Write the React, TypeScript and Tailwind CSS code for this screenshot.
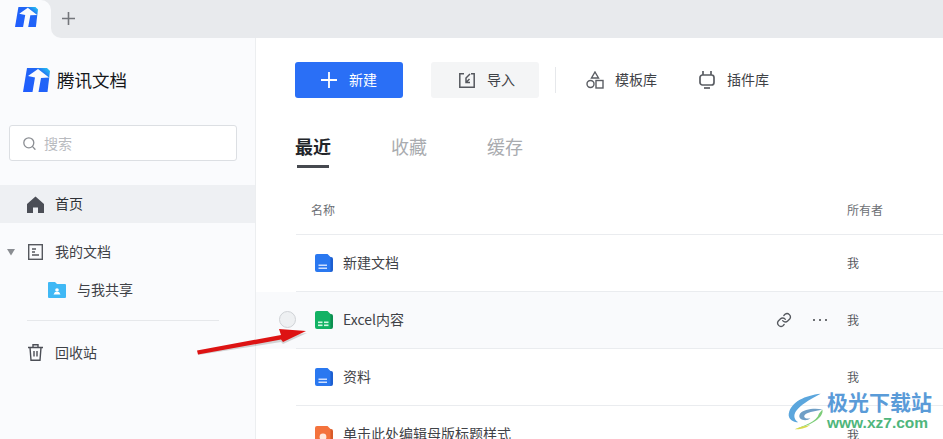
import React from "react";

const font = { fontFamily: '"Noto Sans CJK SC", "Liberation Sans", sans-serif' };

function Logo({ w, h, id }: { w: number; h: number; id: string }) {
  return (
    <svg width={w} height={h} viewBox="0 0 27 24" preserveAspectRatio="none" className="shrink-0">
      <defs>
        <linearGradient id={id} x1="0" y1="1" x2="1" y2="0">
          <stop offset="0" stopColor="#1f5cff" />
          <stop offset="0.72" stopColor="#2166f5" />
          <stop offset="0.92" stopColor="#25b4f0" />
        </linearGradient>
      </defs>
      <path d="M4 0 H24 L27 3 L24.5 24 H0 Z" fill={`url(#${id})`} />
      <path d="M15 1 L5 8 L12 9.5 L9.5 24 L15.5 24 L18 10 L26 9.5 Z" fill="#fafbfd" />
    </svg>
  );
}

function DocIcon({ color, dark, kind }: { color: string; dark: string; kind: "doc" | "sheet" | "ppt" }) {
  return (
    <svg width="18" height="18" viewBox="0 0 18 18" className="shrink-0">
      <path d="M12 3 H16 a2 2 0 0 1 2 2 V16 a2 2 0 0 1 -2 2 H12 Z" fill={dark} />
      <path d="M2 0 H12.5 L15.5 3 V18 H2 a2 2 0 0 1 -2 -2 V2 a2 2 0 0 1 2 -2 Z" fill={color} />
      {kind === "doc" && (
        <g fill="#cfe0ff">
          <rect x="3.5" y="10.5" width="8.5" height="1.5" />
          <rect x="3.5" y="13.5" width="8.5" height="1.5" />
        </g>
      )}
      {kind === "sheet" && (
        <g fill="#d5f7e4">
          <rect x="3" y="10.5" width="4.5" height="1.6" />
          <rect x="9" y="10.5" width="4.5" height="1.6" />
          <rect x="3" y="13.5" width="4.5" height="1.6" />
          <rect x="9" y="13.5" width="4.5" height="1.6" />
        </g>
      )}
      {kind === "ppt" && <circle cx="8" cy="11" r="3.4" fill="#ffe9df" />}
    </svg>
  );
}

function Row({
  icon,
  name,
  hover,
  last,
}: {
  icon: React.ReactNode;
  name: string;
  hover?: boolean;
  last?: boolean;
}) {
  return (
    <div className={`flex h-[57px] shrink-0 ${hover ? "bg-[#f9fafc]" : ""}`}>
      <div className="w-[40px] shrink-0 flex items-center justify-center pl-[23px]">
        {hover && <div className="w-[17px] h-[17px] shrink-0 rounded-full bg-[#eef0f2] border border-[#cfd2d6] mb-[2px]" />}
      </div>
      <div className={`flex-1 flex items-center pl-[19px] ${last ? "" : "border-b border-[#eaecef]"}`}>
        {icon}
        <span className="ml-[10px] w-[433px] shrink-0 text-[14px] text-[#3f4247] whitespace-nowrap pb-[2px]">{name}</span>
        <div className="w-[71px] flex items-center shrink-0">
          {hover && (
            <>
              <svg width="16" height="16" viewBox="0 0 24 24" fill="none" stroke="#55585e" strokeWidth="2" strokeLinecap="round" strokeLinejoin="round" className="shrink-0">
                <path d="M10 13a5 5 0 0 0 7.5.5l3-3a5 5 0 0 0-7-7l-1.7 1.7" />
                <path d="M14 11a5 5 0 0 0-7.5-.5l-3 3a5 5 0 0 0 7 7l1.7-1.7" />
              </svg>
              <span className="ml-[21px] flex gap-[4px]">
                <i className="block w-[2px] h-[2px] rounded-full bg-[#3f4247]" />
                <i className="block w-[2px] h-[2px] rounded-full bg-[#3f4247]" />
                <i className="block w-[2px] h-[2px] rounded-full bg-[#3f4247]" />
              </span>
            </>
          )}
        </div>
        <span className="text-[12px] text-[#55585e]">我</span>
      </div>
    </div>
  );
}

export default function App() {
  return (
    <div className="relative w-[943px] h-[439px] overflow-hidden bg-white flex flex-col" style={font}>
      {/* tab bar */}
      <div className="h-[38px] shrink-0 bg-[#e8eaed] flex items-start">
        <div className="w-[51px] h-[38px] bg-[#fafbfd] rounded-tr-[10px] pl-[15px] pt-[7px]">
          <Logo w={23} h={20} id="lgTab" />
        </div>
        <div className="w-[18px] h-[38px] bg-[#fafbfd]">
          <div className="w-[18px] h-[38px] bg-[#e8eaed] rounded-bl-[10px]" />
        </div>
        <svg width="13" height="13" viewBox="0 0 13 13" className="mt-[12px] ml-[-7px]" stroke="#73767b" strokeWidth="1.6">
          <path d="M6.5 0 V13 M0 6.5 H13" />
        </svg>
      </div>

      <div className="flex flex-1 min-h-0">
        {/* sidebar */}
        <div className="w-[256px] shrink-0 bg-[#fafbfd] border-r border-[#eceef0] flex flex-col">
          <div className="flex items-center pl-[23px] mt-[30px] h-[24px] mb-[33px]">
            <Logo w={27} h={24} id="lgSide" />
            <span className="ml-[7px] text-[17.5px] leading-none text-[#15171a]">腾讯文档</span>
          </div>
          <div className="ml-[9px] w-[228px] h-[36px] bg-white border border-[#dcdfe3] rounded-[3px] flex items-center pl-[12px]">
            <svg width="15" height="15" viewBox="0 0 15 15" fill="none" stroke="#8b8e93" strokeWidth="1.3" strokeLinecap="round">
              <circle cx="6.8" cy="6.8" r="5" />
              <path d="M10.6 10.6 L13 13.2" />
            </svg>
            <span className="ml-[7px] text-[14px] text-[#b9bbbf]">搜索</span>
          </div>
          <div className="mt-[24px] h-[38px] bg-[#eef0f3] flex items-center pl-[27px]">
            <svg width="17" height="17" viewBox="0 0 17 17" className="shrink-0">
              <path d="M8.5 0.5 L17 8 V17 H11 V11.5 H6 V17 H0 V8 Z" fill="#4b4e56" />
            </svg>
            <span className="ml-[11px] text-[14px] text-[#2e3136] pb-[2px]">首页</span>
          </div>
          <div className="mt-[10px] h-[38px] flex items-center pl-[7px]">
            <svg width="8" height="7" viewBox="0 0 8 7" className="shrink-0"><path d="M0 0 H8 L4 6.5 Z" fill="#8a8d92" /></svg>
            <svg width="15" height="16" viewBox="0 0 15 16" fill="none" stroke="#55585e" strokeWidth="1.4" className="ml-[13px] shrink-0">
              <rect x="0.7" y="0.7" width="13.6" height="14.6" />
              <path d="M4 5 H8 M4 8 H7 M4 11 H11" />
            </svg>
            <span className="ml-[12px] text-[14px] text-[#3f4247] pb-[2px]">我的文档</span>
          </div>
          <div className="h-[38px] flex items-center pl-[48px]">
            <svg width="18" height="16" viewBox="0 0 18 16" className="shrink-0">
              <path d="M0 1 a1 1 0 0 1 1 -1 H7 L9 2 H17 a1 1 0 0 1 1 1 V15 a1 1 0 0 1 -1 1 H1 a1 1 0 0 1 -1 -1 Z" fill="#3fb8f5" />
              <circle cx="9" cy="8" r="1.8" fill="#fff" />
              <path d="M5.5 12.5 H12.5 L11 10 H7 Z" fill="#fff" />
            </svg>
            <span className="ml-[11px] text-[14px] text-[#3f4247] pb-[2px]">与我共享</span>
          </div>
          <div className="mt-[11px] ml-[27px] w-[192px] border-t border-[#e6e8eb]" />
          <div className="mt-[12px] h-[38px] flex items-center pl-[28px]">
            <svg width="15" height="17" viewBox="0 0 15 17" fill="none" stroke="#4b4e56" strokeWidth="1.4" className="shrink-0">
              <path d="M0 3.5 H15 M5 3.5 V0.8 H10 V3.5 M2 3.5 L3 16.2 H12 L13 3.5 M6 7 V12.5 M9 7 V12.5" />
            </svg>
            <span className="ml-[12px] text-[14px] text-[#3f4247]">回收站</span>
          </div>
        </div>

        {/* main */}
        <div className="flex-1 min-w-0 flex flex-col">
          <div className="flex items-center pl-[39px] pt-[24px] shrink-0">
            <div className="w-[108px] h-[36px] bg-[#2a6ff6] rounded-[3px] flex items-center pl-[26px]">
              <svg width="16" height="16" viewBox="0 0 16 16" stroke="#fff" strokeWidth="1.8"><path d="M8 0 V16 M0 8 H16" /></svg>
              <span className="ml-[12px] text-[14px] text-white pb-[2px]">新建</span>
            </div>
            <div className="ml-[28px] w-[108px] h-[36px] bg-[#f4f5f6] rounded-[3px] flex items-center pl-[28px]">
              <svg width="16" height="15" viewBox="0 0 16 15" fill="none" stroke="#55585e" strokeWidth="1.5" className="shrink-0">
                <path d="M5 0.8 H0.8 V14.2 H15.2 V0.8 H12" />
                <path d="M11 1 L7 5 V9.5 H11 M7 9.5 L10.5 6" />
              </svg>
              <span className="ml-[12px] text-[14px] text-[#3f4247] pb-[2px]">导入</span>
            </div>
            <div className="ml-[16px] h-[26px] border-l border-[#e6e8eb]" />
            <svg width="18" height="18" viewBox="0 0 18 18" fill="none" stroke="#5a5d63" strokeWidth="1.4" className="ml-[30px] shrink-0">
              <path d="M9 1 L12.5 7 H5.5 Z" />
              <circle cx="4.5" cy="13" r="3.5" />
              <rect x="10" y="9.5" width="7" height="7.5" />
            </svg>
            <span className="ml-[11px] text-[14px] text-[#3f4247] pb-[2px]">模板库</span>
            <svg width="16" height="18" viewBox="0 0 16 18" fill="none" stroke="#5a5d63" strokeWidth="1.7" className="ml-[42px] shrink-0">
              <path d="M4 0 V4 M12 0 V4" />
              <rect x="1" y="4" width="14" height="10" rx="2.5" />
              <path d="M5 17 H11" />
            </svg>
            <span className="ml-[12px] text-[14px] text-[#3f4247] pb-[2px]">插件库</span>
          </div>

          <div className="flex pl-[39px] mt-[35px] h-[59px] shrink-0 items-start">
            <div className="flex flex-col items-center w-[36px]">
              <span className="text-[18px] leading-[26px] font-bold text-[#22252a]">最近</span>
              <div className="mt-[6px] w-[32px] h-[3px] bg-[#46494f]" />
            </div>
            <span className="ml-[60px] text-[18px] leading-[26px] text-[#a9abaf]">收藏</span>
            <span className="ml-[60px] text-[18px] leading-[26px] text-[#a9abaf]">缓存</span>
          </div>

          <div className="ml-[40px] h-[43px] shrink-0 flex items-center pl-[15px] border-b border-[#eaecef] text-[12px] text-[#6c6f75]">
            <span className="w-[536px] pb-[6px]">名称</span>
            <span className="pb-[6px]">所有者</span>
          </div>

          <Row icon={<DocIcon color="#2a78f0" dark="#1d5fd0" kind="doc" />} name="新建文档" />
          <Row hover icon={<DocIcon color="#12b264" dark="#0c8f50" kind="sheet" />} name="Excel内容" />
          <Row icon={<DocIcon color="#2a78f0" dark="#1d5fd0" kind="doc" />} name="资料" />
          <Row last icon={<DocIcon color="#f4733d" dark="#d85a28" kind="ppt" />} name="单击此处编辑母版标题样式" />
        </div>
      </div>

      {/* red arrow annotation */}
      <svg width="120" height="40" viewBox="0 0 120 40" className="absolute left-[195px] top-[322px]">
        <path d="M3 33 L86 20 L88 22 L112 11 L87 14 L4 30 Z" fill="#8a8a8a" opacity="0.35" />
        <path d="M2 28.5 L86 13 L84 7 L111 9 L88 20 L86 17.5 L3 32.5 Z" fill="#dd1313" />
      </svg>

      {/* watermark */}
      <div className="absolute left-[787px] top-[389px] w-[156px] h-[50px] flex">
        <svg width="38" height="38" viewBox="0 0 42 44" className="shrink-0 mt-[4px]">
          <path d="M38 1 C20 3 4 10 1 24 C0 30 6 34 12 34 C6 30 6 24 12 18 C18 12 28 6 38 1 Z" fill="#5ba6dd" />
          <path d="M14 24 C18 19 30 17 40 19 C34 21 24 21 20 25 C17 28 21 31 26 29 C22 34 10 31 14 24 Z" fill="#6f9fc6" />
          <path d="M40 19 C42 28 28 37 8 42 C18 38 34 33 36 24 Z" fill="#7ccd78" />
          <path d="M8 42 C14 39 20 38 26 37 C20 41 14 42 8 42 Z" fill="#d9d94a" />
        </svg>
        <div className="ml-[2px] flex flex-col">
          <span className="text-[21px] leading-[24px] font-bold text-[#5a9bd8] whitespace-nowrap">极光下载站</span>
          <span className="text-[15.5px] leading-[20px] font-bold text-[#4fb67c] whitespace-nowrap" style={{ fontFamily: '"Liberation Sans", sans-serif' }}>www.xz7.com</span>
        </div>
      </div>
    </div>
  );
}
